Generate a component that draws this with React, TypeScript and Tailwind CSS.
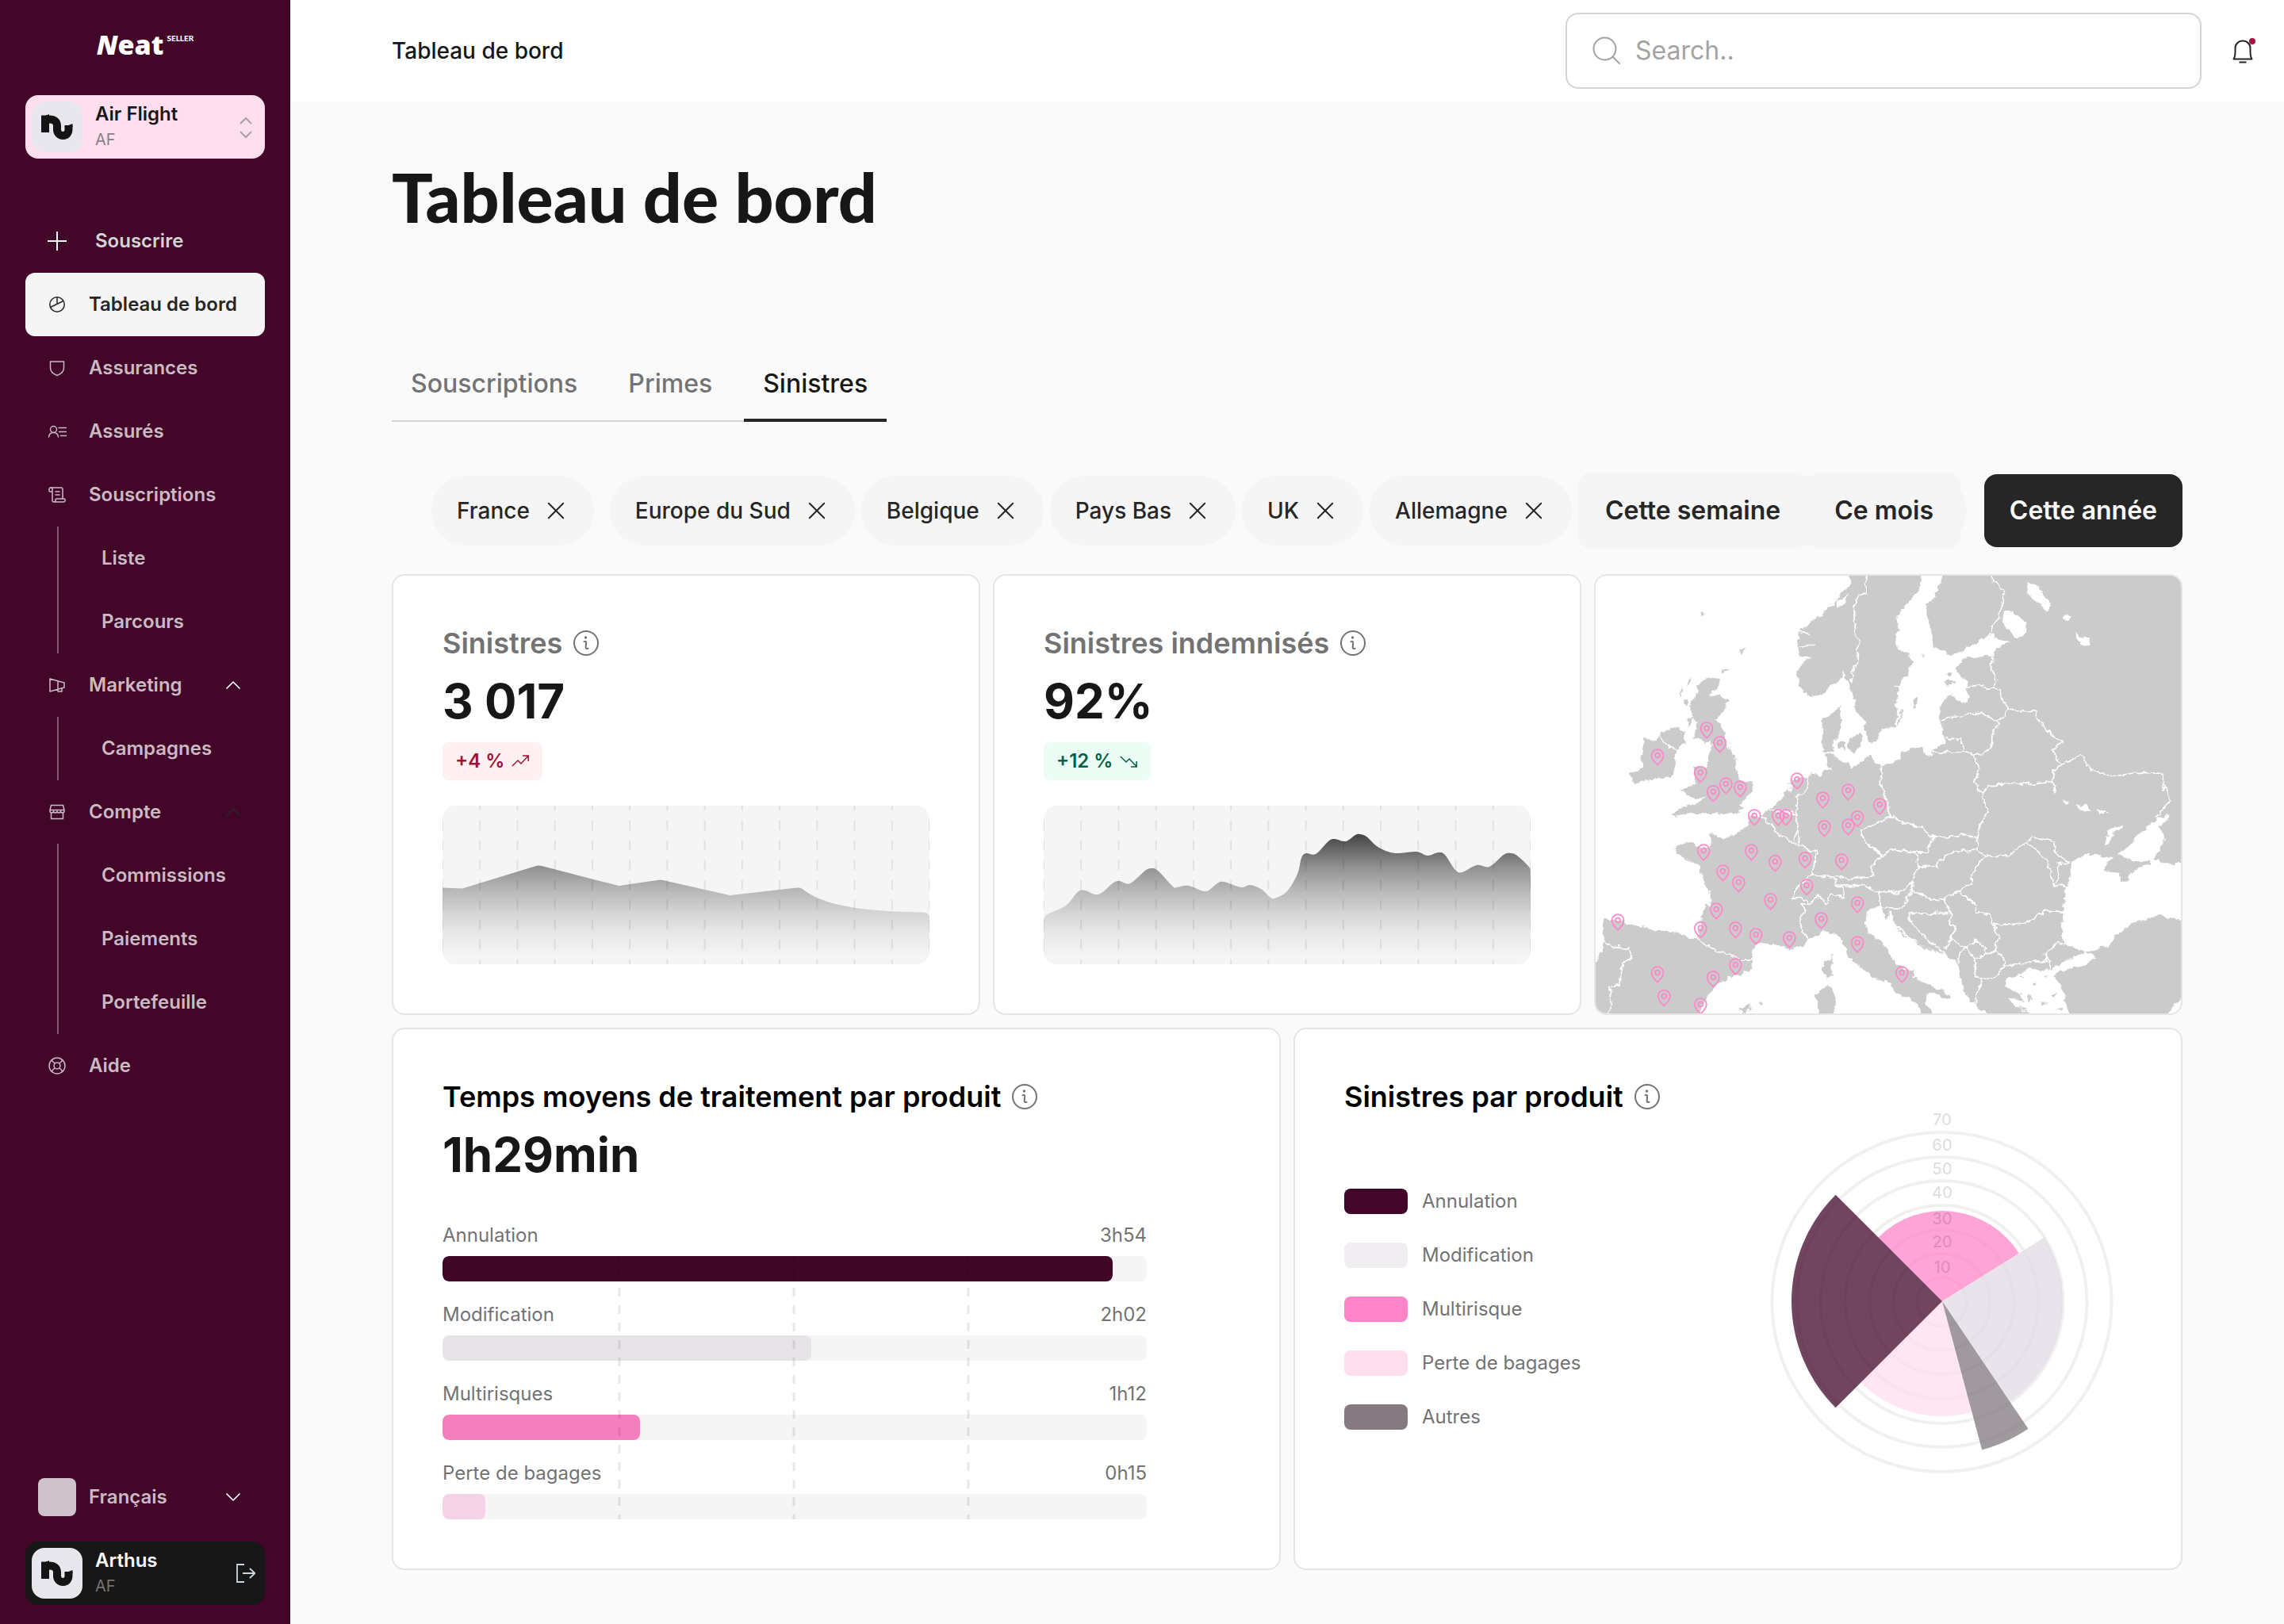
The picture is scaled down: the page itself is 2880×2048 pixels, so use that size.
import React from 'react'
import { ChevronDown, ChevronUp, LifeBuoy, ScrollText, X } from 'lucide-react'

const BrandMark = () => (
  <span className="flex size-16 shrink-0 items-center justify-center rounded-2xl bg-[#e8e7ee]">
    <svg viewBox="0 0 64 64" className="size-16" fill="none" stroke="#141414" strokeWidth="10">
      <path d="M17 39V22.500H22C29 22.500 32 25.500 32 31V35C32 40 35 43 39.500 43C43.500 43 46.500 40 46.500 35V30" />
      <path d="M12 20L22 16V22H12ZM41 32L51.500 28V32Z" fill="#141414" stroke="none" />
    </svg>
  </span>
)

const PlusIcon = () => (
  <svg viewBox="0 0 24 24" className="size-6 text-white" fill="none" stroke="currentColor" strokeWidth="2">
    <path d="M12 0V24M0 12H24" />
  </svg>
)

const PieIcon = () => (
  <svg viewBox="0 0 24 24" className="size-6" fill="none" stroke="currentColor" strokeWidth="1.5">
    <circle cx="12" cy="12" r="9.200" />
    <path d="M12 3V12M3.500 15.500L20 7.500" />
  </svg>
)

const ShieldIcon = () => (
  <svg viewBox="0 0 24 24" className="size-6" fill="none" stroke="currentColor" strokeWidth="1.5" strokeLinejoin="round">
    <path d="M3.500 4H20.500V12C20.500 17 17 19.500 12 21.500C7 19.500 3.500 17 3.500 12Z" />
  </svg>
)

const MembersIcon = () => (
  <svg viewBox="0 0 24 24" className="size-6" fill="none" stroke="currentColor" strokeWidth="1.5" strokeLinecap="round">
    <circle cx="7.500" cy="9.500" r="4" />
    <path d="M1.500 19C2 15.500 4.500 13.500 7.500 13.500S13 15.500 13.500 19M14 7.500H23.500M14.500 12.500H23.500M16.500 17.500H23.500" />
  </svg>
)

const ScrollIcon = () => <ScrollText className="size-6" strokeWidth={1.5} />

const MegaphoneIcon = () => (
  <svg viewBox="0 0 24 24" className="size-6" fill="none" stroke="currentColor" strokeWidth="1.500" strokeLinejoin="round">
    <path d="M3 4L21 9V15L3 20ZM13 7V17.500M13 17V20H18V16" />
  </svg>
)

const StoreIcon = () => (
  <svg viewBox="0 0 24 24" className="size-6" fill="none" stroke="currentColor" strokeWidth="1.500" strokeLinejoin="round">
    <path d="M4.500 3.500H19.500L21 9.500V11C21 13.500 16.500 13.500 16.500 11C16.500 13.500 12 13.500 12 11C12 13.500 7.500 13.500 7.500 11C7.500 13.500 3 13.500 3 11V9.500ZM3 9.500H21M4.500 13V20.500H19.500V13" />
  </svg>
)

const HelpIcon = () => <LifeBuoy className="size-6" strokeWidth={1.5} />

const InfoIcon = () => (
  <svg viewBox="0 0 32 32" className="size-8 shrink-0 text-[#737373]" fill="none" stroke="currentColor" strokeWidth="2">
    <circle cx="16" cy="16" r="15" />
    <circle cx="15.500" cy="9" r="1.700" fill="currentColor" stroke="none" />
    <path d="M13.500 14.200C15.500 13.400 16.400 14 16.100 15.800L15.700 20.500C15.600 22.800 16.400 23.600 18.500 22.800" strokeLinecap="round" />
  </svg>
)

const TrendIcon: React.FC<{ up: boolean }> = ({ up }) => (
  <svg viewBox="0 0 24 24" className="size-6" fill="none" stroke="currentColor" strokeWidth="1.500">
    {up ? <path d="M2 18L9 11L13 15L22 5.500M15 5H22.200V12" /> : <path d="M2 6L9 13L13 9L22 18.500M15 19H22.200V12" />}
  </svg>
)

const SearchIcon = () => (
  <svg viewBox="0 0 36 36" className="size-9 shrink-0" fill="none" stroke="#a3a3a3" strokeWidth="2" strokeLinecap="round">
    <circle cx="15.500" cy="15.500" r="14" />
    <path d="M25.500 25.500L34 34" />
  </svg>
)

const BellIcon = () => (
  <svg viewBox="0 0 40 40" className="size-10" fill="none" stroke="#262626" strokeWidth="2">
    <path d="M8.500 30.500H31.500C29.800 28 29.500 25 29.500 21V17C29.500 11.500 25.500 7.500 20 7.500S10.500 11.500 10.500 17V21C10.500 25 10.200 28 8.500 30.500ZM15.500 34.500H24.500" strokeLinejoin="round" />
    <circle cx="32" cy="8" r="4" fill="#a6123f" stroke="none" />
  </svg>
)

const LogoutIcon = () => (
  <svg viewBox="0 0 24 24" className="size-6" fill="none" stroke="#cbd5e1" strokeWidth="1.800">
    <path d="M10 1H1V23H10M8 12H23M17 6L23.500 12L17 18" />
  </svg>
)

const NavItem: React.FC<{ icon: any; label: string; active?: boolean; chevron?: 'light' | 'dark' }> = ({ icon: Icon, label, active, chevron }) => (
  <a
    href="#"
    className={`flex h-20 items-center gap-7 rounded-xl px-7 text-2xl font-semibold ${active ? 'bg-[#f5f5f5] text-[#262626]' : 'text-[#cbb9c3]'}`}
  >
    <Icon />
    <span className="flex-1 whitespace-nowrap">{label}</span>
    {chevron && <ChevronUp size={32} strokeWidth={1.3} className={chevron === 'light' ? '-mr-1 text-white' : '-mr-1 text-[#262626]'} />}
  </a>
)

const SubNav: React.FC<{ items: string[] }> = ({ items }) => (
  <div className="ml-10 border-l-2 border-[#85586f]">
    {items.map((item) => (
      <a key={item} href="#" className="flex h-20 items-center pl-[54px] text-2xl font-semibold text-[#cbb9c3]">
        {item}
      </a>
    ))}
  </div>
)

const Sidebar = () => (
  <aside className="flex w-[366px] shrink-0 flex-col bg-[#410628] px-8 pt-8 pb-6">
    <div className="mb-10 flex h-12 items-center justify-center gap-1 text-white">
      <span className="font-['Open_Sans',sans-serif] text-[34px] leading-[48px] font-extrabold">
        <span className="italic">N</span>eat
      </span>
      <span className="self-start pt-2 font-['Lato',sans-serif] text-[10px] leading-4 font-black">SELLER</span>
    </div>

    <button className="flex h-20 items-center gap-4 rounded-2xl bg-[#ffdeee] px-2 text-left">
      <BrandMark />
      <span className="flex flex-1 flex-col">
        <span className="text-2xl leading-8 font-semibold text-[#171717]">Air Flight</span>
        <span className="text-xl leading-8 text-[#8a7f86]">AF</span>
      </span>
      <svg viewBox="0 0 32 32" className="size-8" fill="none" stroke="#a3a3a3" strokeWidth="2">
        <path d="M9 12L16 5L23 12M9 22L16 29L23 22" />
      </svg>
    </button>

    <nav className="mt-16">
      <a href="#" className="flex h-20 items-center gap-9 px-7 text-2xl font-semibold text-[#d4d4d4]">
        <PlusIcon />
        Souscrire
      </a>
      <NavItem icon={PieIcon} label="Tableau de bord" active />
      <NavItem icon={ShieldIcon} label="Assurances" />
      <NavItem icon={MembersIcon} label="Assurés" />
      <NavItem icon={ScrollIcon} label="Souscriptions" />
      <SubNav items={['Liste', 'Parcours']} />
      <NavItem icon={MegaphoneIcon} label="Marketing" chevron="light" />
      <SubNav items={['Campagnes']} />
      <NavItem icon={StoreIcon} label="Compte" chevron="dark" />
      <SubNav items={['Commissions', 'Paiements', 'Portefeuille']} />
      <NavItem icon={HelpIcon} label="Aide" />
    </nav>

    <div className="mt-auto mb-4 flex h-20 items-center gap-4 px-4">
      <span className="size-12 rounded-lg bg-[#cfc3cb]" />
      <select aria-label="Langue" className="flex-1 appearance-none bg-transparent text-2xl font-semibold text-[#cbb9c3]">
        <option>Français</option>
      </select>
      <ChevronDown size={32} strokeWidth={1.3} className="mr-2 text-white" />
    </div>

    <button className="flex h-20 items-center gap-4 rounded-2xl bg-[#171717] pr-3 pl-2 text-left">
      <BrandMark />
      <span className="flex flex-1 flex-col">
        <span className="text-2xl leading-8 font-semibold text-[#fafafa]">Arthus</span>
        <span className="text-xl leading-8 text-[#737373]">AF</span>
      </span>
      <LogoutIcon />
    </button>
  </aside>
)

const Chip: React.FC<{ label: string }> = ({ label }) => (
  <span className="flex h-[88px] items-center gap-[17px] rounded-full bg-[#f5f5f5] px-8 text-[28px] font-medium whitespace-nowrap text-[#262626]">
    {label}
    <button aria-label={`Retirer ${label}`}>
      <X size={32} strokeWidth={1.3} absoluteStrokeWidth={false} className="scale-115" />
    </button>
  </span>
)

// ---- area charts ----

const claimsPath =
  'M0 103.500L25 104.500L118 76Q121 75 125 76L220 100.500Q223 101.500 226 100.500L271 94Q274 93 278 94L360 112.500Q363 113.500 367 112.500L447 103.500Q451 103 453 104.500C484 129 540 133 606 134.500Q613 135 614 140V200H0Z'

const paidPoints = [
  [0, 144], [5, 137], [28, 126], [43, 109], [52, 107], [69, 112], [87, 98], [95, 95], [109, 98], [128, 82], [136, 79],
  [144, 82], [163, 102], [168, 103], [183, 101], [204, 108], [219, 98], [227, 96], [249, 103], [260, 100], [274, 105],
  [285, 115], [291, 117], [307, 108], [320, 86], [325, 66], [331, 60], [343, 61], [359, 45], [367, 42], [381, 45],
  [393, 37], [399, 36], [407, 39], [420, 51], [434, 58], [448, 60], [470, 58], [484, 63], [498, 59], [506, 62],
  [519, 81], [528, 84], [546, 75], [562, 77], [580, 62], [589, 60], [597, 63], [611, 76], [614, 82],
]

// Catmull-Rom through the points, closed on the bottom edge
const smoothArea = (pts: number[][]) => {
  let d = `M${pts[0][0]} ${pts[0][1]}`
  for (let i = 0; i < pts.length - 1; i++) {
    const p0 = pts[i - 1] || pts[i]
    const p1 = pts[i]
    const p2 = pts[i + 1]
    const p3 = pts[i + 2] || p2
    d += `C${p1[0] + (p2[0] - p0[0]) / 6} ${p1[1] + (p2[1] - p0[1]) / 6} ${p2[0] - (p3[0] - p1[0]) / 6} ${p2[1] - (p3[1] - p1[1]) / 6} ${p2[0]} ${p2[1]}`
  }
  return d + 'V200H0Z'
}

const AreaChart: React.FC<{ id: string; path: string }> = ({ id, path }) => (
  <svg viewBox="0 0 614 200" preserveAspectRatio="none" className="mt-8 h-[200px] w-full rounded-2xl bg-[#f5f5f5]">
    <defs>
      <linearGradient id={id} gradientUnits="userSpaceOnUse" x1="0" y1="0" x2="0" y2="200">
        <stop offset="0.180" stopColor="#171717" stopOpacity="0.800" />
        <stop offset="0.380" stopColor="#171717" stopOpacity="0.460" />
        <stop offset="0.520" stopColor="#171717" stopOpacity="0.290" />
        <stop offset="0.670" stopColor="#171717" stopOpacity="0.150" />
        <stop offset="0.800" stopColor="#171717" stopOpacity="0.060" />
        <stop offset="0.960" stopColor="#171717" stopOpacity="0" />
      </linearGradient>
    </defs>
    <path d={path} fill={`url(#${id})`} />
    {Array.from({ length: 14 }, (_, i) => (
      <line
        key={i}
        x1={(i * 614) / 13}
        x2={(i * 614) / 13}
        y1="0"
        y2="200"
        stroke="#000"
        strokeOpacity="0.080"
        strokeWidth="2"
        strokeDasharray="12.500 12.500"
        strokeDashoffset="6.250"
      />
    ))}
  </svg>
)

const StatCard: React.FC<{ id: string; title: string; value: string; delta: string; up: boolean; path: string }> = ({ id, title, value, delta, up, path }) => (
  <section className="rounded-2xl border-2 border-[#e5e5e5] bg-white p-[62px]">
    <h2 className="flex items-center gap-3.5 text-4xl leading-[46px] font-semibold text-[#737373]">
      {title}
      <InfoIcon />
    </h2>
    <p className="mt-2.5 text-6xl leading-[80px] font-bold text-[#171717]">{value}</p>
    <p className={`mt-3 flex h-12 w-fit items-center gap-2 rounded-lg px-4 text-2xl font-semibold ${up ? 'bg-[#fff0f1] text-[#9f1239]' : 'bg-[#ecfdf5] text-[#065f46]'}`}>
      {delta}
      <TrendIcon up={up} />
    </p>
    <AreaChart id={id} path={path} />
  </section>
)

// ---- map ----

const land = [
  // Norway and Sweden
  'M684 0L684 68L660 92L650 120L628 140L612 168L590 178L575 200L552 215L550 262L548 290L556 305L585 305L560 330L550 360L552 405L565 428L582 442L612 440L625 425L640 402L655 393L664 378L667 348L672 378L684 398L690 428L697 450L697 478L710 508L726 530L722 552L730 580L733 600L752 602L760 590L758 572L775 553L802 548L810 500L808 470L812 410L800 402L815 404L828 378L838 375L842 345L852 328L838 300L810 282L806 235L812 215L807 180L818 148L838 118L862 88L874 48L868 0Z',
  // Finland, Russia and the continent
  'M934 0L920 60L905 90L900 115L884 125L886 160L893 190L900 235L902 272L922 285L940 298L950 302L975 285L1010 262L1040 242L1055 225L1068 242L1100 258L1078 272L1062 285L1058 302L1010 305L980 318L960 350L972 370L988 388L995 440L990 465L975 465L950 435L930 450L920 490L922 530L928 570L935 600L915 615L900 640L888 644L876 638L870 620L845 622L820 640L815 658L768 682L750 670L742 645L728 655L712 668L690 690L675 675L655 660L645 640L640 600L655 575L660 560L668 530L660 510L662 470L648 495L615 515L612 560L612 600L618 632L625 650L628 680L635 700L618 700L615 715L582 708L580 722L560 720L530 735L520 770L505 800L480 830L470 840L450 850L425 862L420 890L400 905L360 935L330 920L322 910L322 935L325 962L300 965L272 948L232 950L232 985L265 1005L295 1030L300 1075L318 1110L318 1135L325 1165L310 1160L300 1195L298 1240L285 1275L265 1270L220 1250L180 1248L100 1222L85 1210L45 1212L42 1260L48 1285L38 1330L10 1380L10 1580L290 1580L300 1500L320 1465L345 1430L370 1410L400 1400L432 1380L430 1315L450 1290L500 1298L530 1318L560 1302L580 1278L600 1265L620 1250L650 1258L665 1280L680 1335L710 1368L745 1410L790 1430L805 1460L835 1478L860 1500L880 1560L910 1560L900 1530L882 1508L885 1470L905 1460L945 1490L945 1470L900 1440L850 1410L855 1385L830 1380L800 1355L770 1290L735 1255L725 1225L730 1180L765 1160L770 1180L778 1212L790 1180L800 1215L830 1258L870 1300L935 1332L965 1360L975 1400L978 1455L1000 1490L1030 1525L1045 1525L1040 1580L1160 1580L1150 1536L1110 1500L1100 1480L1140 1490L1120 1460L1090 1440L1095 1412L1120 1400L1160 1378L1190 1385L1212 1385L1245 1350L1295 1330L1295 1320L1250 1300L1235 1265L1240 1200L1245 1110L1255 1085L1262 1020L1290 985L1325 985L1345 1000L1370 990L1360 1015L1345 1045L1385 1050L1390 1085L1410 1080L1415 1050L1440 1025L1470 1020L1465 1010L1425 1010L1395 990L1380 985L1400 975L1430 925L1490 860L1515 850L1510 870L1490 890L1505 925L1495 960L1475 1000L1500 1015L1600 1022L1600 0Z',
  // Turkey
  'M1600 1220L1541 1210L1480 1195L1470 1205L1415 1225L1385 1260L1360 1300L1295 1322L1325 1338L1295 1370L1250 1388L1230 1388L1215 1405L1235 1440L1245 1480L1250 1510L1265 1580L1500 1580L1520 1520L1541 1485L1600 1460Z',
  // Great Britain
  'M310 380L348 385L345 405L320 440L345 437L370 455L360 490L335 525L350 540L362 570L362 610L385 650L390 700L398 730L430 740L430 770L410 800L395 815L415 830L380 848L340 845L290 848L262 845L228 858L218 855L250 825L290 808L310 790L275 795L248 765L285 745L275 685L315 685L322 635L325 600L308 605L300 590L275 590L290 550L280 520L265 480L280 450L290 410Z',
  // Ireland
  'M148 590L185 595L190 565L225 548L250 560L258 600L232 630L232 680L220 720L165 730L125 742L112 710L150 690L140 655L150 630Z',
  // islands
  'M640 1330L640 1390L628 1418L615 1395L618 1355L635 1345Z',
  'M630 1435L648 1475L642 1580L608 1580L598 1465Z',
  'M395 1515L425 1500L425 1520L410 1532ZM446 1496L460 1498L456 1506Z',
  'M685 585L715 565L718 600L700 645L680 615ZM652 600L672 600L670 628L655 622Z',
  'M850 460L860 445L860 475L853 487ZM818 488L821 492L812 548L809 545Z',
  'M933 385L960 390L940 412ZM935 362L950 365L940 378ZM870 295L880 300L876 310Z',
  'M238 445L250 412L252 428ZM258 402L276 376L272 395ZM262 520L278 515L268 552ZM254 450L268 460L262 475Z',
  'M400 285L414 275L405 305ZM352 352L370 352L358 368ZM292 152L308 158L300 166Z',
  'M1130 1402L1140 1415L1128 1412ZM1160 1430L1175 1428L1168 1440ZM1190 1400L1205 1402L1195 1410ZM1208 1470L1228 1465L1220 1482ZM1150 1470L1160 1480L1148 1490ZM1180 1495L1195 1500L1184 1510ZM1225 1515L1240 1510L1234 1525ZM1125 1510L1145 1520L1130 1525Z',
  'M800 1225L835 1270L828 1272ZM845 1282L900 1318L890 1320Z',
].join('')

const lakes = [
  'M1085 150L1110 152L1145 190L1145 220L1120 245L1100 215L1078 185Z',
  'M1145 50L1180 70L1190 100L1210 125L1200 152L1170 115L1150 90Z',
  'M1243 162L1260 165L1255 182L1243 178ZM1270 225L1305 245L1310 272L1285 262Z',
  'M1240 800L1258 802L1255 815ZM1272 818L1300 816L1314 838L1292 835ZM1328 832L1364 845L1335 843Z',
  'M1395 882L1395 895L1370 915L1362 945L1348 960L1356 905L1378 895Z',
  'M530 742L540 748L528 772L522 765Z',
  'M650 118L680 92L672 125L655 138Z',
].join('')

const borders = [
  'M735 0L725 55L732 90L710 92L696 125L697 190L702 235L713 258L702 275L710 310L695 345L690 395',
  'M1050 0L1055 45L1085 75L1085 120L1070 175L1043 240',
  'M1058 302L1053 345L1068 390L1062 412L1045 418L1020 402L990 410',
  'M1062 412L1078 425L1082 455L1097 485L1088 510L1068 525L1045 510L1015 500L980 510L940 512L926 530',
  'M1068 525L1072 545L1055 575L1055 615L1030 640L1005 645L980 625L975 592L935 585',
  'M903 637L960 635L982 627',
  'M1097 485L1130 495L1165 488L1175 525L1210 575L1240 600L1215 625L1220 655L1235 680L1215 695L1213 735L1150 745L1080 745L1045 755L1030 778',
  'M1213 735L1220 780',
  'M1005 645L1022 690L1012 740L1028 780L1045 840L1022 890L1018 930',
  'M1235 680L1285 645L1310 690L1365 720L1430 705L1500 708L1500 745L1517 800L1482 862',
  'M768 682L765 745L780 790L792 855',
  'M792 855L715 905L725 945L770 990L800 970L855 980L885 980L905 925L870 895L820 875L792 855',
  'M905 925L950 925L990 918L1018 930L1015 972L960 975L915 1010L910 1030L865 1025L855 980',
  'M1015 972L1035 990L1100 990L1160 928L1218 940L1222 985L1258 1015L1228 1020L1228 1070L1215 1090',
  'M1145 942L1200 1005L1215 1090L1252 1098',
  'M770 990L740 1030L748 1060L700 1070L650 1065L585 1058',
  'M645 1068L650 1095L720 1092L760 1115L810 1118L848 1090L855 1045L865 1025',
  'M1035 990L1010 1040L1000 1085L970 1112L930 1140L900 1145L850 1110L848 1090',
  'M760 1115L768 1170L820 1175L835 1135L850 1110',
  'M930 1140L948 1185L890 1190L840 1188L842 1215L880 1270L935 1332',
  'M948 1185L945 1220L960 1240L950 1275L932 1310',
  'M970 1112L1010 1155L1015 1185L1052 1192L1055 1225L1075 1270L1062 1320',
  'M1055 1225L1100 1228L1150 1220L1190 1182L1248 1182',
  'M1062 1320L1085 1340L1088 1375L1130 1358L1195 1355L1195 1325L1225 1292L1248 1295',
  'M950 1275L988 1310L1010 1280L1040 1310L1035 1330L1010 1350L988 1310L968 1330L968 1362',
  'M1035 1330L1062 1320M1010 1350L1012 1400L1030 1415L1060 1412L1088 1375',
  'M1030 1415L1015 1470L1010 1500M1195 1325L1207 1385',
  'M285 1275L340 1320L385 1335L395 1350L432 1350',
  'M48 1285L65 1302L110 1308L118 1340L95 1365L85 1435L60 1440L65 1480L55 1560',
  'M450 850L490 895L495 915L540 945L570 965L602 978L585 1058',
  'M578 722L575 760L550 790L545 860L550 905L540 940M552 905L554 950M470 840L500 835L545 850',
  'M585 1058L555 1090L535 1140L560 1135L580 1155L605 1130L622 1160L635 1125L665 1135L668 1100L645 1090',
  'M580 1155L560 1158L568 1180L555 1210L562 1255L580 1278',
  'M613 635L648 640M190 575L205 610L232 625M552 268L595 266M552 222L585 228',
].join('')

const pins = [
  [313, 553], [347, 602], [185, 646], [297, 705], [363, 744], [400, 755], [330, 771], [548, 728], [437, 853], [499, 853],
  [519, 853], [615, 793], [681, 766], [763, 815], [705, 858], [681, 886], [619, 891], [305, 973], [429, 973], [491, 1011],
  [569, 1000], [664, 1006], [355, 1044], [396, 1082], [573, 1093], [479, 1142], [338, 1175], [705, 1153], [611, 1208],
  [82, 1213], [297, 1240], [388, 1240], [441, 1262], [528, 1273], [705, 1290], [388, 1366], [185, 1393], [330, 1409],
  [821, 1393], [202, 1474], [297, 1502],
]

// map units -> card pixels
const SX = 0.4847
const SY = 0.3667

const MapCard = () => (
  <section aria-label="Carte des sinistres" className="overflow-hidden rounded-2xl border-2 border-[#e5e5e5] bg-white">
    <svg viewBox="0 0 738 552" preserveAspectRatio="xMidYMid slice" className="size-full">
      <defs>
        <filter id="coast" x="0" y="0" width="1" height="1">
          <feTurbulence type="fractalNoise" baseFrequency="0.120" numOctaves="3" seed="4" />
          <feDisplacementMap in="SourceGraphic" scale="8" xChannelSelector="R" yChannelSelector="G" />
        </filter>
      </defs>
      <g filter="url(#coast)">
        <g transform={`scale(${SX} ${SY}) translate(-24 -28)`}>
          <path d={land} fill="#cbcbcb" />
          <path d={lakes} fill="#fff" />
          <path d={borders} fill="none" stroke="#fff" strokeWidth="1.700" strokeLinejoin="round" vectorEffect="non-scaling-stroke" />
        </g>
      </g>
      {pins.map(([x, y], i) => (
        <g key={i} transform={`translate(${(x - 24) * SX} ${(y - 28) * SY})`} fill="none" stroke="#ff85c8" strokeWidth="1.700">
          <path d="M0 12C-3.500 9 -7.500 4.500 -7.500 0A7.500 7.500 0 0 1 7.500 0C7.500 4.500 3.500 9 0 12Z" />
          <circle r="3" />
        </g>
      ))}
    </svg>
  </section>
)

// ---- processing times ----

const durations = [
  { label: 'Annulation', time: '3h54', pct: 95.2, color: 'bg-[#3f0625]' },
  { label: 'Modification', time: '2h02', pct: 52.4, color: 'bg-[#e7e4e8]' },
  { label: 'Multirisques', time: '1h12', pct: 28, color: 'bg-[#f57fbc]' },
  { label: 'Perte de bagages', time: '0h15', pct: 6.1, color: 'bg-[#f5d3e5]' },
]

const DurationCard = () => (
  <section className="rounded-2xl border-2 border-[#e5e5e5] bg-white p-[62px]">
    <h2 className="flex items-center gap-3.5 text-4xl leading-[46px] font-semibold text-black">
      Temps moyens de traitement par produit
      <InfoIcon />
    </h2>
    <p className="mt-2.5 text-6xl leading-[80px] font-bold text-[#171717]">1h29min</p>
    <div className="relative mt-[46px] flex max-w-[888px] flex-col gap-[26px]">
      {durations.map((d) => (
        <div key={d.label}>
          <div className="flex justify-between text-2xl leading-8 text-[#737373]">
            <span>{d.label}</span>
            <span>{d.time}</span>
          </div>
          <div className="mt-2.5 h-8 overflow-hidden rounded-lg bg-[#f5f5f5]">
            <div className={`h-full rounded-lg ${d.color}`} style={{ width: `${d.pct}%` }} />
          </div>
        </div>
      ))}
      <svg viewBox="0 0 888 332" preserveAspectRatio="none" className="pointer-events-none absolute inset-x-0 bottom-0 h-[332px] w-full">
        {[223, 443, 663].map((x) => (
          <line key={x} x1={x} x2={x} y1="0" y2="332" stroke="#000" strokeOpacity="0.090" strokeWidth="3" strokeDasharray="11 11" strokeDashoffset="4" />
        ))}
      </svg>
    </div>
  </section>
)

// ---- polar chart ----

const legend = [
  { label: 'Annulation', color: 'bg-[#410628]' },
  { label: 'Modification', color: 'bg-[#f0eef1]' },
  { label: 'Multirisque', color: 'bg-[#ff85c8]' },
  { label: 'Perte de bagages', color: 'bg-[#ffdeee]' },
  { label: 'Autres', color: 'bg-[#857a80]' },
]

const slices = [
  { from: 32, to: 135, r: 114, color: '#ff85c8' },
  { from: -56, to: 32, r: 152, color: '#e1dbe4' },
  { from: -135, to: -75, r: 145, color: '#ffdeee' },
  { from: -75, to: -56, r: 194, color: '#80777c' },
  { from: 135, to: 225, r: 190, color: '#41062a' },
]

const slicePath = (from: number, to: number, r: number) => {
  const pt = (a: number) => `${221 + r * Math.cos((a * Math.PI) / 180)} ${245 - r * Math.sin((a * Math.PI) / 180)}`
  return `M221 245L${pt(from)}A${r} ${r} 0 0 0 ${pt(to)}Z`
}

const ticks = [
  ['70', 15], ['60', 47], ['50', 77], ['40', 107], ['30', 140], ['20', 169], ['10', 201],
] as const

const PolarChart = () => (
  <svg viewBox="0 0 440 480" className="mt-9 mr-5 h-[480px] w-[440px] shrink-0">
    {[214, 183, 153, 122, 91, 61, 31].map((r) => (
      <circle key={r} cx="220.500" cy="246" r={r} fill="none" stroke="#f0f0f0" strokeWidth="4" />
    ))}
    {slices.map((s) => (
      <path key={s.from} d={slicePath(s.from, s.to, s.r)} fill={s.color} fillOpacity="0.750" />
    ))}
    {ticks.map(([t, y]) => (
      <text key={t} x="221" y={y + 8} textAnchor="middle" fontSize="20" fontWeight="500" fill="#000" fillOpacity="0.150">
        {t}
      </text>
    ))}
  </svg>
)

const ProductCard = () => (
  <section className="flex justify-between rounded-2xl border-2 border-[#e5e5e5] bg-white p-[62px]">
    <div>
      <h2 className="flex items-center gap-3.5 text-4xl leading-[46px] font-semibold text-black">
        Sinistres par produit
        <InfoIcon />
      </h2>
      <ul className="mt-[93px] flex flex-col gap-9">
        {legend.map((l) => (
          <li key={l.label} className="flex h-8 items-center gap-[18px] text-2xl text-[#737373]">
            <span className={`h-8 w-20 rounded-lg ${l.color}`} />
            {l.label}
          </li>
        ))}
      </ul>
    </div>
    <PolarChart />
  </section>
)

function App() {
  return (
    <div className="flex min-h-screen bg-[#fafafa] font-['Inter',sans-serif] text-[#171717]">
      <Sidebar />

      <div className="min-w-0 flex-1">
        <header className="flex h-32 items-center gap-8 bg-white pr-8 pl-32">
          <span className="flex-1 text-[28px] font-medium">Tableau de bord</span>
          <label className="flex h-24 w-[802px] items-center gap-[18px] rounded-2xl border-2 border-[#d4d4d4] px-8">
            <SearchIcon />
            <input
              type="search"
              aria-label="Search"
              placeholder="Search.."
              className="min-w-0 flex-1 bg-transparent text-[32px] outline-none placeholder:text-[#a3a3a3]"
            />
          </label>
          <button aria-label="Notifications">
            <BellIcon />
          </button>
        </header>

        <main className="px-32 pt-16 pb-16">
          <h1 className="font-['Lato',sans-serif] text-[86px] leading-[112px] font-black">Tableau de bord</h1>

          <div role="tablist" className="mt-40 flex w-fit gap-4 text-[32px] leading-10 font-medium text-[#737373] shadow-[inset_0_-2px_0_#d4d4d4]">
            <button role="tab" className="px-6 pb-7">Souscriptions</button>
            <button role="tab" className="px-6 pb-7">Primes</button>
            <button role="tab" aria-selected="true" className="border-b-4 border-[#262626] px-6 pb-6 text-[#171717]">Sinistres</button>
          </div>

          <div className="mt-16 flex h-24 items-center gap-5 pl-[50px]">
            <Chip label="France" />
            <div className="flex items-center gap-2">
              <Chip label="Europe du Sud" />
              <Chip label="Belgique" />
              <Chip label="Pays Bas" />
              <Chip label="UK" />
              <Chip label="Allemagne" />
              <div className="flex h-[88px] items-center rounded-full bg-[#f5f5f5] pr-2 text-[32px] font-semibold whitespace-nowrap text-[#262626]">
                <button className="h-24 rounded-2xl bg-[#f5f5f5] px-[34px]">Cette semaine</button>
                <button className="h-24 rounded-2xl bg-[#f5f5f5] px-[34px]">Ce mois</button>
              </div>
            </div>
            <button className="ml-auto h-[92px] rounded-2xl bg-[#262626] px-8 text-[32px] font-semibold whitespace-nowrap text-[#fafafa]">
              Cette année
            </button>
          </div>

          <div className="mt-8 grid grid-cols-3 gap-4">
            <StatCard id="claims" title="Sinistres" value="3 017" delta="+4 %" up path={claimsPath} />
            <StatCard id="paid" title="Sinistres indemnisés" value="92%" delta="+12 %" up={false} path={smoothArea(paidPoints)} />
            <MapCard />
          </div>

          <div className="mt-4 grid grid-cols-2 gap-4">
            <DurationCard />
            <ProductCard />
          </div>
        </main>
      </div>
    </div>
  )
}

export default App
